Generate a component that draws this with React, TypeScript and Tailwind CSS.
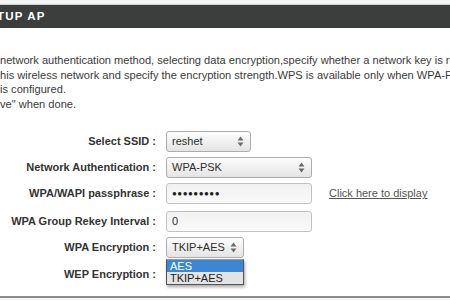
import React from "react";

// Wireless security form, clipped at the left edge as in the screenshot.

const Arrows = () => (
  <svg width="7" height="11" viewBox="0 0 7 11" className="shrink-0">
    <path d="M3.5 0.5 L6.5 4.5 L0.5 4.5 Z" fill="#6b6b6b" />
    <path d="M3.5 10.5 L6.5 6.5 L0.5 6.5 Z" fill="#6b6b6b" />
  </svg>
);

const Select = ({ value, width }: { value: string; width: string }) => (
  <div
    className={`${width} h-[21px] flex items-center justify-between pl-[5px] pr-[6px] rounded-[3px] border border-[#adadad] bg-gradient-to-b from-[#fdfdfd] to-[#e4e4e4] text-[11px] text-[#2e2e2e]`}
  >
    <span>{value}</span>
    <Arrows />
  </div>
);

const Field = ({ children }: { children?: React.ReactNode }) => (
  <div className="w-[146px] h-[21px] flex items-center pl-[5px] rounded-[3px] border border-[#c2c2c2] bg-gradient-to-b from-[#f1f1f1] to-[#fafafa] text-[11px] text-[#2e2e2e]">
    {children}
  </div>
);

const Row = ({
  label,
  className,
  children,
}: {
  label: string;
  className?: string;
  children?: React.ReactNode;
}) => (
  <div className={`flex items-center ${className ?? ""}`}>
    <div className="w-[158px] shrink-0 text-right pr-[2px] font-bold text-[11px] text-[#333]">
      {label}
    </div>
    <div className="ml-[8px] flex items-center">{children}</div>
  </div>
);

export default function App() {
  return (
    <div className="w-[450px] h-[300px] overflow-hidden bg-white flex flex-col font-['Liberation_Sans',Arial,sans-serif]">
      <div className="h-[5px] shrink-0 bg-[#f3f3f3] border-b border-[#d0d0d0]" />
      <div className="h-[23px] shrink-0 bg-[#3c3e3d] flex items-center text-white font-bold text-[11.5px] tracking-[1.2px] pl-[1px]">
        <span className="-ml-[4px]">TUP AP</span>
      </div>

      <div className="mt-[25px] text-[11.1px] leading-[14.5px] text-[#3a3a3a] whitespace-nowrap">
        <div>network authentication method, selecting data encryption,specify whether a network key is required</div>
        <div>his wireless network and specify the encryption strength.WPS is available only when WPA-PSK</div>
        <div>is configured.</div>
        <div>ve" when done.</div>
      </div>

      <Row label="Select SSID :" className="mt-[20px]">
        <Select value="reshet" width="w-[85px]" />
      </Row>
      <Row label="Network Authentication :" className="mt-[5px]">
        <Select value="WPA-PSK" width="w-[146px]" />
      </Row>
      <Row label="WPA/WAPI passphrase :" className="mt-[5px]">
        <Field>
          <span className="text-[8px] tracking-[0.5px] text-[#222]">●●●●●●●●●</span>
        </Field>
        <span className="ml-[17px] text-[11px] text-[#555] underline">Click here to display</span>
      </Row>
      <Row label="WPA Group Rekey Interval :" className="mt-[7px]">
        <Field>0</Field>
      </Row>
      <Row label="WPA Encryption :" className="mt-[5px]">
        <div className="relative">
          <Select value="TKIP+AES" width="w-[78px]" />
          <div className="absolute left-0 top-[22px] w-[78px] border border-[#555] border-t-[#9a9a9a] shadow-[1px_2px_3px_rgba(0,0,0,0.35)] text-[11px] z-10">
            <div className="h-[12px] leading-[12px] pl-[3px] bg-[#3b87d4] text-white">AES</div>
            <div className="h-[12px] leading-[12px] pl-[3px] bg-[#e3e3e3] text-[#222]">TKIP+AES</div>
          </div>
        </div>
      </Row>
      <Row label="WEP Encryption :" className="mt-[6px] h-[21px]" />

      <div className="mt-[11px] border-t-2 border-[#8c8c8c] flex-1 bg-[#f4f4f4]" />
    </div>
  );
}
